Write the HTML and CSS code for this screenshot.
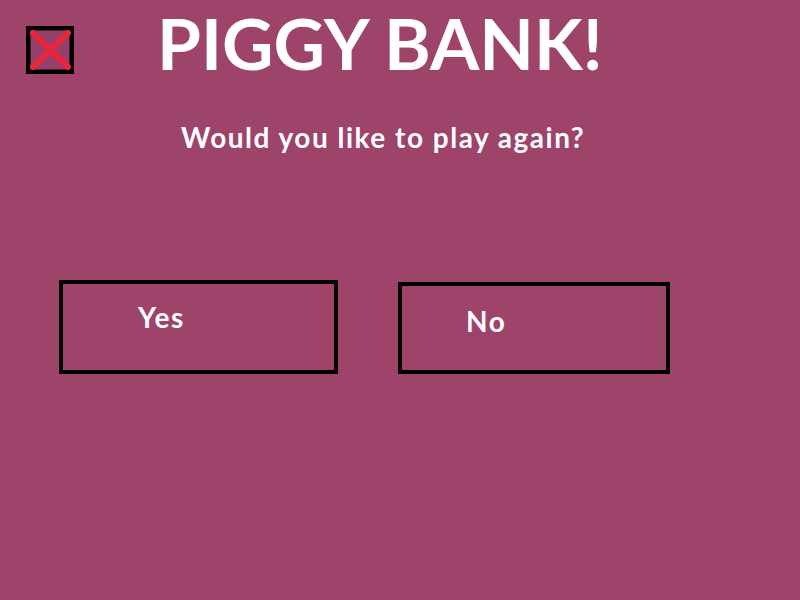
FILE: index.html
```html
<!DOCTYPE html>
<html>
<head>
<meta charset="utf-8">
<link rel="stylesheet" href="styles.css">
</head>
<body>
<div class="page">
  <header class="top">
    <button class="close" aria-label="Close">
      <svg width="48" height="48" viewBox="0 0 48 48">
        <rect x="2" y="2" width="44" height="44" fill="#94406a" stroke="#000" stroke-width="5"/>
        <path d="M7 7 L42 41 M42 7 L7 41" stroke="#e8253a" stroke-width="6" stroke-linecap="round"/>
      </svg>
    </button>
    <h1 class="title">PIGGY BANK!</h1>
  </header>
  <p class="question">Would you like to play again?</p>
  <div class="choices">
    <button class="choice choice-yes">Yes</button>
    <button class="choice choice-no">No</button>
  </div>
</div>
</body>
</html>
```

FILE: styles.css
```css
html, body {
  margin: 0;
  padding: 0;
  background: #9e436a;
}
.page {
  width: 800px;
  height: 600px;
  font-family: Lato, "Open Sans", "Liberation Sans", sans-serif;
  color: #fff;
}
.top {
  display: flex;
  align-items: flex-start;
  padding: 0 0 0 26px;
}
.close {
  width: 48px;
  height: 48px;
  margin-top: 26px;
  padding: 0;
  border: 0;
  background: none;
  display: block;
}
.close svg { display: block; }
.title {
  margin: 0 0 0 83px;
  font-size: 71px;
  font-weight: 700;
  line-height: 1.2;
}
.question {
  margin: 36px 0 0 181px;
  font-size: 28px;
  font-weight: 700;
  line-height: 1.2;
  letter-spacing: 1.5px;
}
.choices {
  display: flex;
  align-items: flex-start;
  padding: 125px 0 0 59px;
  gap: 60px;
}
.choice {
  box-sizing: border-box;
  border: 4px solid #000;
  background: transparent;
  color: #fff;
  font-family: Lato, "Open Sans", "Liberation Sans", sans-serif;
  font-weight: 700;
  font-size: 28px;
  line-height: 1.2;
  letter-spacing: 1.5px;
  text-align: left;
}
.choice-yes {
  width: 279px;
  height: 94px;
  padding: 17px 0 35px 75px;
}
.choice-no {
  width: 272px;
  height: 92px;
  margin-top: 2px;
  padding: 19px 0 31px 64px;
}
```
